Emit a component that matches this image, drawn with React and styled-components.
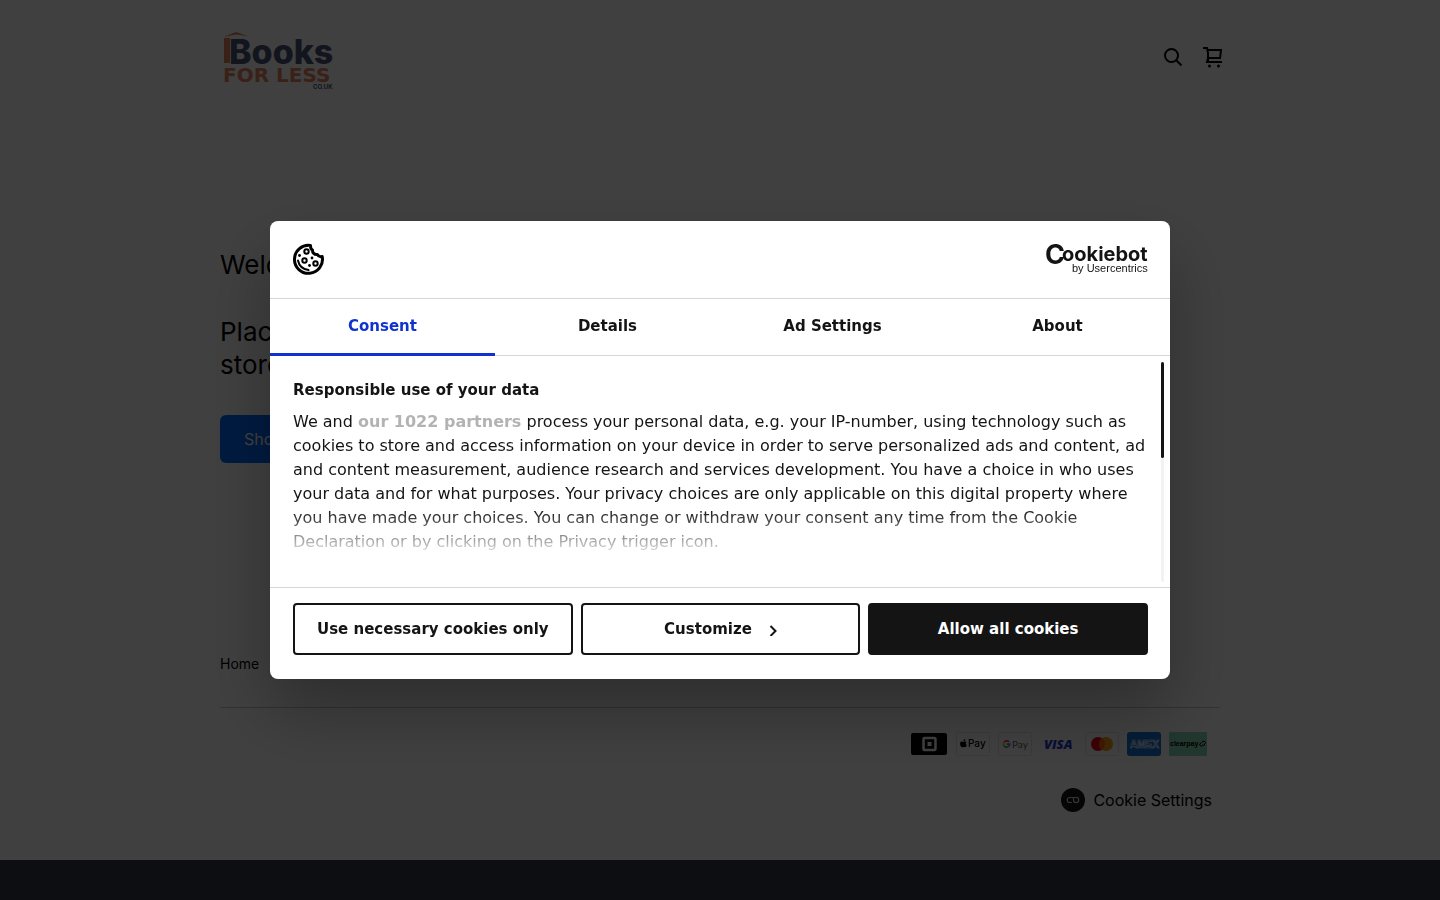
import React from "react";
import styled, { createGlobalStyle } from "styled-components";

const GlobalStyle = createGlobalStyle`
  * {
    box-sizing: border-box;
  }
  body {
    margin: 0;
    background-color: white;
    font-family: Inter, "Liberation Sans", sans-serif;
    overflow: hidden;
  }
`;

const Page = styled.div`
  display: flex;
  flex-direction: column;
  min-height: 100vh;
`;

const Container = styled.div`
  width: 100%;
  max-width: 1032px;
  margin: 0 auto;
  padding: 0 16px;
`;

const Header = styled(Container)`
  display: flex;
  justify-content: space-between;
  align-items: center;
  height: 116px;
`;

const LogoLink = styled.a`
  display: block;
  height: 60px;
`;

const Actions = styled.div`
  display: flex;
  gap: 16px;
  margin-right: -6px;
`;

const IconButton = styled.button`
  display: flex;
  padding: 0;
  border: none;
  background-color: transparent;
  color: black;
`;

const Hero = styled(Container)`
  display: flex;
  flex-direction: column;
  align-items: flex-start;
  gap: 34px;
  padding-top: 132px;
  padding-bottom: 190px;
`;

const HeroText = styled.p`
  margin: 0;
  max-width: 420px;
  font-size: 26px;
  line-height: 33px;
  color: black;
`;

const ShopButton = styled.button`
  height: 48px;
  padding: 0 24px;
  border: none;
  border-radius: 6px;
  background-color: #006aff;
  color: white;
  font-family: inherit;
  font-size: 16px;
`;

const Footer = styled(Container)`
  display: flex;
  flex-direction: column;
  align-items: stretch;
`;

const FooterLink = styled.a`
  align-self: flex-start;
  color: black;
  font-size: 14px;
  line-height: 22px;
  text-decoration: none;
`;

const Divider = styled.hr`
  width: 100%;
  height: 1px;
  margin: 32px 0 24px;
  border: none;
  background-color: #c4c4c4;
`;

const Payments = styled.ul`
  display: flex;
  justify-content: flex-end;
  gap: 8px;
  margin: 0;
  padding: 0 13px 0 0;
  list-style: none;
`;

const Payment = styled.li`
  display: flex;
  height: 24px;
`;

const CookieSettings = styled.button`
  display: flex;
  align-items: center;
  align-self: flex-end;
  gap: 8px;
  margin: 32px 8px 0 0;
  padding: 0;
  border: none;
  background-color: transparent;
  color: black;
  font-family: inherit;
  font-size: 16px;
  line-height: 24px;
`;

const BottomBar = styled.div`
  flex: 1;
  margin-top: 48px;
  background-color: #373b48;
`;

const Overlay = styled.div`
  position: fixed;
  inset: 0;
  display: flex;
  justify-content: center;
  align-items: center;
  background-color: rgba(0, 0, 0, 0.75);
`;

const Dialog = styled.section`
  display: flex;
  flex-direction: column;
  width: 100%;
  max-width: 900px;
  border-radius: 8px;
  overflow: hidden;
  background-color: white;
  color: #141414;
  font-family: "DejaVu Sans", sans-serif;
  font-size: 15px;
  box-shadow: 0 32px 68px rgba(0, 0, 0, 0.3);
`;

const DialogHeader = styled.header`
  display: flex;
  justify-content: space-between;
  align-items: center;
  height: 78px;
  padding: 0 22px;
  border-bottom: 1px solid #d6d6d6;
`;

const Tabs = styled.div`
  display: grid;
  grid-template-columns: repeat(4, 1fr);
  height: 57px;
  border-bottom: 1px solid #d6d6d6;
`;

const Tab = styled.button`
  height: 57px;
  padding: 0 0 1px;
  border: none;
  border-bottom: 3px solid ${(props) => (props.$active ? "#1032cf" : "transparent")};
  background-color: transparent;
  color: ${(props) => (props.$active ? "#1032cf" : "#141414")};
  font-family: inherit;
  font-size: 15px;
  font-weight: 700;
`;

const Body = styled.div`
  display: flex;
  justify-content: space-between;
  height: 231px;
  padding: 6px 6px 5px 23px;
`;

const Copy = styled.div`
  flex: 1;
  max-width: 862px;
  padding-top: 16px;
  font-size: 16px;
  line-height: 24px;
  mask-image: linear-gradient(to bottom, black 148px, transparent 197px);
`;

const Title = styled.h2`
  margin: 0 0 8px;
  font-size: 15px;
  line-height: 24px;
`;

const Text = styled.p`
  margin: 0;
`;

const Partners = styled.a`
  color: #b3b3b3;
  font-weight: 700;
  text-decoration: none;
`;

const Track = styled.div`
  width: 3px;
  border-radius: 2px;
  background-color: #f2f2f2;
`;

const Thumb = styled.div`
  height: 96px;
  border-radius: 2px;
  background-color: #141414;
`;

const DialogFooter = styled.footer`
  display: grid;
  grid-template-columns: repeat(3, 1fr);
  gap: 8px;
  padding: 15px 22px 24px 23px;
  border-top: 1px solid #d6d6d6;
`;

const DialogButton = styled.button`
  display: flex;
  justify-content: center;
  align-items: center;
  gap: 17px;
  height: 52px;
  border: 2px solid #141414;
  border-radius: 4px;
  background-color: ${(props) => (props.$primary ? "#141414" : "white")};
  color: ${(props) => (props.$primary ? "white" : "#141414")};
  font-family: inherit;
  font-size: 15px;
  font-weight: 700;
`;

const tabs = ["Consent", "Details", "Ad Settings", "About"];

const StoreLogo = () => (
  <svg width="124" height="64" viewBox="0 0 124 64" fontFamily="Inter, sans-serif">
    <path d="M3 9l13-5 12 4-12-1.500z" fill="#e8825e" />
    <path d="M4 10h6v25h-6z" fill="#e8825e" />
    <text x="9" y="36" fontSize="34" fontWeight="800" fill="#4a5578">
      Books
    </text>
    <text x="3" y="54" fontSize="20" fontWeight="700" fill="#e8825e" fontFamily="DejaVu Sans, sans-serif">
      FOR LESS
    </text>
    <text x="93" y="61" fontSize="6" fontWeight="700" fill="#4a5578">
      CO.UK
    </text>
  </svg>
);

const SearchIcon = () => (
  <svg width="24" height="24" viewBox="0 0 24 24" fill="none" stroke="currentColor" strokeWidth="2">
    <circle cx="9.500" cy="9.500" r="6.500" />
    <path d="M14 14l5.500 5.500" />
  </svg>
);

const CartIcon = () => (
  <svg width="24" height="24" viewBox="0 0 24 24" fill="none" stroke="currentColor" strokeWidth="2">
    <path d="M1 2h4l1 5v9h14M5 4h14l-1 8H6M6 12l-1 4h2" />
    <circle cx="7.500" cy="20" r="1.500" fill="currentColor" stroke="none" />
    <circle cx="16.500" cy="20" r="1.500" fill="currentColor" stroke="none" />
  </svg>
);

const CookieIcon = () => (
  <svg width="33" height="33" viewBox="0 0 33 33" fill="none" stroke="black">
    <path
      d="M18.500 2.500A14 14 0 1 0 30.200 13.500c-2 .5-3.900-.2-4.900-2-2.900.4-5.100-1.700-4.800-4.500C19.200 6.300 18.400 4.500 18.500 2.500z"
      strokeWidth="3"
      strokeLinejoin="round"
    />
    <g strokeWidth="2">
      <circle cx="14.500" cy="8.500" r="2.200" />
      <circle cx="12.500" cy="17.500" r="2.200" />
      <circle cx="23.500" cy="20.500" r="2.200" />
    </g>
    <path d="M6 17.500c1 5 4.500 8.700 10.500 9.500" strokeWidth="2" strokeLinecap="round" />
    <g fill="black" stroke="none">
      <circle cx="7.500" cy="12.500" r="1.400" />
      <circle cx="20" cy="15" r="1.400" />
      <circle cx="17.500" cy="22.500" r="1.400" />
    </g>
  </svg>
);

const CookiebotLogo = () => (
  <svg width="104" height="34" viewBox="0 0 104 34" fill="#141414" fontFamily="Inter, sans-serif">
    <text x="1" y="21" fontSize="27" fontWeight="700">
      C
    </text>
    <text x="18" y="18" fontSize="20" fontWeight="700">
      ookiebot
    </text>
    <text x="28" y="29" fontSize="11" fontFamily="Liberation Sans, sans-serif">
      by Usercentrics
    </text>
  </svg>
);

const TriggerIcon = () => (
  <svg width="24" height="24" viewBox="0 0 24 24" fill="none" stroke="#d0d0d0" strokeWidth="1.200">
    <circle cx="12" cy="12" r="12" fill="#141414" stroke="none" />
    <path d="M16 9.500H8.700a2.500 2.500 0 0 0 0 5H11" />
    <path d="M12.500 9.500V12a2.600 2.600 0 1 0 2.600-2.600" />
  </svg>
);

const SquareCard = () => (
  <svg width="37" height="24" viewBox="0 0 37 24">
    <rect y="1" width="36" height="22" rx="2" fill="black" />
    <rect x="12.500" y="6" width="12" height="12" rx="1" fill="none" stroke="white" strokeWidth="2.500" />
    <rect x="16.500" y="10" width="4" height="4" fill="white" />
  </svg>
);

const Frame = () => (
  <rect x="0.500" y="0.500" width="33" height="23" rx="2" fill="white" stroke="#e6e6e6" />
);

const ApplePayCard = () => (
  <svg width="34" height="24" viewBox="0 0 34 24">
    <Frame />
    <path
      d="M9.300 9.500c-.9 0-1.300.5-1.900.5s-1.100-.5-1.800-.4C3 9.900 4.300 15.300 6 15.300c.6 0 .8-.4 1.500-.4s.9.400 1.500.4c.8 0 1.500-1.300 1.800-2.200-1.500-.7-1.300-2.400-.1-3-.4-.4-.9-.6-1.400-.6zM7.400 9.400c0-1.300.8-2.200 1.900-2.400.1 1.300-.8 2.300-1.900 2.400z"
      fill="black"
    />
    <text x="12" y="15" fontSize="10" fontWeight="500" fontFamily="Inter, sans-serif">
      Pay
    </text>
  </svg>
);

const GooglePayCard = () => (
  <svg width="34" height="24" viewBox="0 0 34 24">
    <Frame />
    <g fill="none" strokeWidth="1.700">
      <path d="M11 9.800A3.200 3.200 0 0 0 6 10.400" stroke="#ea4335" />
      <path d="M6 10.400a3.200 3.200 0 0 0 0 3.400" stroke="#fbbc04" />
      <path d="M6 13.800a3.200 3.200 0 0 0 4.700.6" stroke="#34a853" />
      <path d="M10.700 14.400a3.200 3.200 0 0 0 1-2.300H8.700" stroke="#4285f4" />
    </g>
    <text x="14" y="16" fontSize="10" fill="#5f6368" fontFamily="Lato, sans-serif">
      Pay
    </text>
  </svg>
);

const VisaCard = () => (
  <svg width="37" height="24" viewBox="0 0 37 24">
    <text
      x="4"
      y="17"
      fontSize="13"
      fontWeight="800"
      fontStyle="italic"
      fill="#2337d6"
      fontFamily="Open Sans, sans-serif"
    >
      VISA
    </text>
  </svg>
);

const MastercardCard = () => (
  <svg width="34" height="24" viewBox="0 0 34 24">
    <Frame />
    <circle cx="13" cy="12" r="7" fill="#eb001b" />
    <circle cx="21" cy="12" r="7" fill="#f79e1b" />
    <path d="M17 6.300a7 7 0 0 1 0 11.400a7 7 0 0 1 0-11.400z" fill="#ff5f00" />
  </svg>
);

const AmexCard = () => (
  <svg width="34" height="24" viewBox="0 0 34 24">
    <rect width="34" height="24" rx="3" fill="#1473d6" />
    <text
      x="3"
      y="16"
      fontSize="10"
      fontWeight="700"
      fill="#1473d6"
      stroke="white"
      strokeWidth="0.600"
      fontFamily="Liberation Sans, sans-serif"
    >
      AMEX
    </text>
  </svg>
);

const ClearpayCard = () => (
  <svg width="38" height="24" viewBox="0 0 38 24">
    <rect width="38" height="24" rx="1" fill="#83dab8" />
    <text x="1" y="14" fontSize="7" fontWeight="700" fontFamily="Liberation Sans, sans-serif">
      clearpay
    </text>
    <path d="M33 14.500l-2.500-1.500 1.500-2.500M32.500 10.500l2.500-1.500 1.500 1.500-1.500 3-2-.5" fill="none" stroke="black" />
  </svg>
);

const cards = [
  { name: "Square", Card: SquareCard },
  { name: "Apple Pay", Card: ApplePayCard },
  { name: "Google Pay", Card: GooglePayCard },
  { name: "Visa", Card: VisaCard },
  { name: "Mastercard", Card: MastercardCard },
  { name: "American Express", Card: AmexCard },
  { name: "Clearpay", Card: ClearpayCard },
];

const ConsentDialog = () => (
  <Overlay>
    <Dialog role="dialog" aria-modal="true" aria-labelledby="consent-title">
      <DialogHeader>
        <CookieIcon />
        <CookiebotLogo />
      </DialogHeader>
      <Tabs role="tablist">
        {tabs.map((tab, i) => (
          <Tab key={tab} role="tab" aria-selected={i === 0} $active={i === 0}>
            {tab}
          </Tab>
        ))}
      </Tabs>
      <Body>
        <Copy>
          <Title id="consent-title">Responsible use of your data</Title>
          <Text>
            We and <Partners href="#">our 1022 partners</Partners> process your personal data, e.g.
            your IP-number, using technology such as cookies to store and access information on
            your device in order to serve personalized ads and content, ad and content
            measurement, audience research and services development. You have a choice in who uses
            your data and for what purposes. Your privacy choices are only applicable on this
            digital property where you have made your choices. You can change or withdraw your
            consent any time from the Cookie Declaration or by clicking on the Privacy trigger
            icon.
          </Text>
        </Copy>
        <Track>
          <Thumb />
        </Track>
      </Body>
      <DialogFooter>
        <DialogButton>Use necessary cookies only</DialogButton>
        <DialogButton>
          Customize
          <svg width="8" height="14" viewBox="0 0 8 14" fill="none" stroke="#141414" strokeWidth="2">
            <path d="M1.500 4l5 5-5 5" />
          </svg>
        </DialogButton>
        <DialogButton $primary>Allow all cookies</DialogButton>
      </DialogFooter>
    </Dialog>
  </Overlay>
);

const App = () => {
  return (
    <>
      <GlobalStyle />
      <Page>
        <Header as="header">
          <LogoLink href="#" aria-label="iBooks for Less">
            <StoreLogo />
          </LogoLink>
          <Actions>
            <IconButton aria-label="Search">
              <SearchIcon />
            </IconButton>
            <IconButton aria-label="Cart">
              <CartIcon />
            </IconButton>
          </Actions>
        </Header>
        <Hero as="main">
          <HeroText>Welcome</HeroText>
          <HeroText>Place an order from our online store</HeroText>
          <ShopButton>Shop now</ShopButton>
        </Hero>
        <Footer as="footer">
          <FooterLink href="#">Home</FooterLink>
          <Divider />
          <Payments>
            {cards.map(({ name, Card }) => (
              <Payment key={name} aria-label={name}>
                <Card />
              </Payment>
            ))}
          </Payments>
          <CookieSettings>
            <TriggerIcon />
            Cookie Settings
          </CookieSettings>
        </Footer>
        <BottomBar />
      </Page>
      <ConsentDialog />
    </>
  );
};

export default App;
